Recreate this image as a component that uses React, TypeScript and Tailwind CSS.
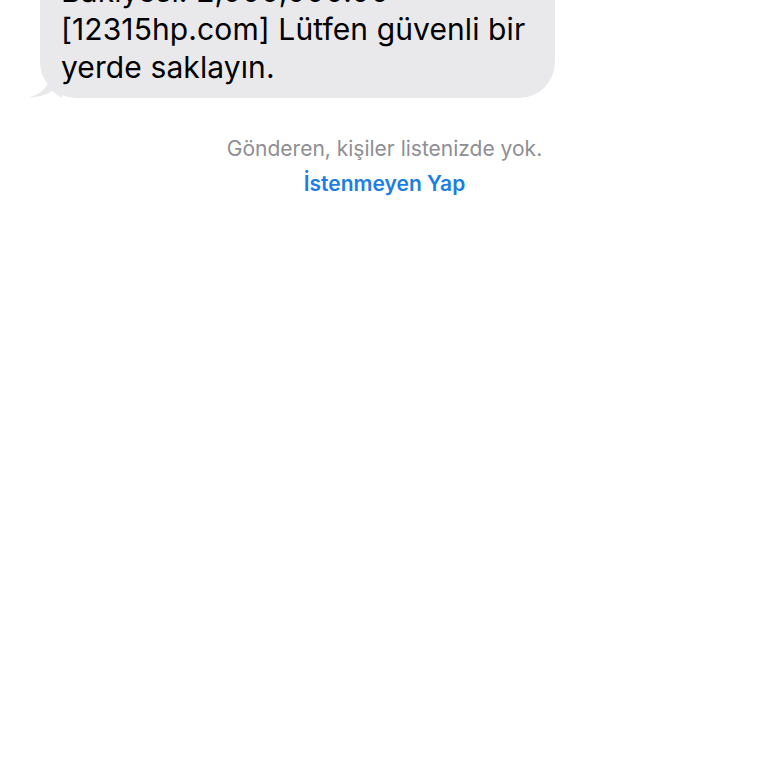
export default function App() {
  return (
    <div
      className="w-[768px] h-[768px] overflow-hidden bg-white flex flex-col"
      style={{ fontFamily: "Inter, 'Noto Sans', sans-serif" }}
    >
      <div className="relative ml-[40px] mt-[-38px] w-[515px] rounded-[36px] bg-[#e9e9eb] pt-[10px] pb-[12px] pl-[21px] pr-[16px]">
        <p className="text-[30px] leading-[38px] text-black tracking-[0.1px]">
          Bakiyesi: 2,000,000.00
          <br />
          [12315hp.com] Lütfen güvenli bir
          <br />
          yerde saklayın.
        </p>
        <svg
          className="absolute left-[-12px] bottom-0"
          width="34"
          height="26"
          viewBox="0 0 34 26"
        >
          <path
            d="M22 0 C22 12 18 20 0 26 C10 25 18 23 24 19 C28 22 31 24 34 26 L34 0 Z"
            fill="#e9e9eb"
          />
        </svg>
      </div>
      <div className="mt-[38px] flex flex-col items-center pl-[1px]">
        <p className="text-[21px] leading-[26px] text-[#8e8e93]">
          Gönderen, kişiler listenizde yok.
        </p>
        <button className="mt-[9px] text-[21px] leading-[26px] font-semibold text-[#1c7ee3]">
          İstenmeyen Yap
        </button>
      </div>
    </div>
  );
}
